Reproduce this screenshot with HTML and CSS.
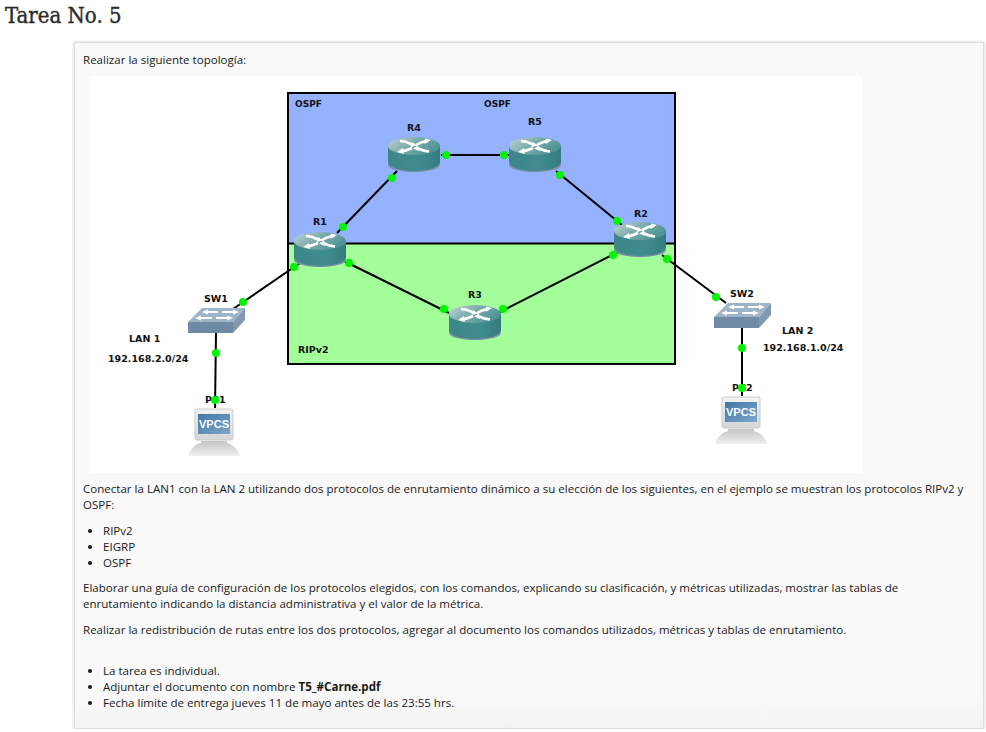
FILE: index.html
```html
<!DOCTYPE html>
<html lang="es">
<head>
    <meta charset="UTF-8">
    <meta name="viewport" content="width=device-width, initial-scale=1.0">
    <title>Tarea No. 5</title>
    <link rel="stylesheet" href="styles.css">
</head>
<body>

    <h1 class="page-title">Tarea No. 5</h1>

    <div class="task-box">
        <p class="intro">Realizar la siguiente topología:</p>

        <svg class="topology" viewBox="89 76 773 397" width="773" height="397" role="img" aria-label="Topología de red">
            <defs>
                <linearGradient id="routerTop" x1="0" y1="0" x2="1" y2="0.5">
                    <stop offset="0" stop-color="#c4d6d6"/>
                    <stop offset="0.5" stop-color="#7dacad"/>
                    <stop offset="1" stop-color="#4f9496"/>
                </linearGradient>
                <linearGradient id="routerSide" x1="0" y1="0" x2="1" y2="0">
                    <stop offset="0" stop-color="#3e8688"/>
                    <stop offset="0.6" stop-color="#3f8c8e"/>
                    <stop offset="1" stop-color="#357b7d"/>
                </linearGradient>
                <linearGradient id="screen" x1="0" y1="0" x2="1" y2="1">
                    <stop offset="0" stop-color="#3f77a8"/>
                    <stop offset="1" stop-color="#7fa6c8"/>
                </linearGradient>
                <linearGradient id="monitor" x1="0" y1="0" x2="0" y2="1">
                    <stop offset="0" stop-color="#f2f3f3"/>
                    <stop offset="1" stop-color="#d3d6d5"/>
                </linearGradient>
                <linearGradient id="pcBase" x1="0" y1="0" x2="0" y2="1">
                    <stop offset="0" stop-color="#c2c5c4"/>
                    <stop offset="1" stop-color="#eff0f0"/>
                </linearGradient>

                <g id="router">
                    <ellipse cx="26" cy="28" rx="26" ry="7" fill="#7d8fa8"/>
                    <path d="M0 9 V25 C0 30 12 34 26 34 C40 34 52 30 52 25 V9 Z" fill="url(#routerSide)"/>
                    <ellipse cx="26" cy="9" rx="26" ry="9" fill="url(#routerTop)"/>
                    <path class="arrow" d="M12 4 C18 4 21 6 25 8 M12 14.5 C17 14 20 13 24 11 M40 4 C35 4 32 6 28 8 M41 14.5 C36 14 33 13 29 11"/>
                    <path class="arrow-head" d="M24 5 L29 8.5 L22.5 10 Z M9 15 L15 11 L16 17 Z M43 3 L37 1.5 L36.5 7 Z M30 8.5 L25 11.5 L31 14 Z"/>
                </g>

                <g id="switch">
                    <path d="M14 0 H57 L45 14 H0 Z" fill="#9db4c9"/>
                    <path d="M0 14 H45 V25 H0 Z" fill="#6f8aa5"/>
                    <path d="M45 14 L57 0 V12 L45 25 Z" fill="#8299b1"/>
                    <path class="sw-arrow" d="M18 4 H30 M34 4 H47 M11 10 H24 M28 10 H41"/>
                    <path class="arrow-head" d="M14 4 L20 1.5 V6.5 Z M51 4 L45 1.5 V6.5 Z M7 10 L13 7.5 V12.5 Z M45 10 L39 7.5 V12.5 Z"/>
                </g>

                <g id="pc">
                    <rect x="0" y="0" width="38" height="31" rx="2" fill="url(#monitor)" stroke="#c9cccb"/>
                    <rect x="3" y="5" width="32" height="20" fill="url(#screen)"/>
                    <path d="M6 32 H32 V34 C38 35 42 40 45 46 C45 47 44 47 43 47 H-5 C-6 47 -7 47 -7 46 C-4 40 0 35 6 34 Z" fill="url(#pcBase)"/>
                    <text class="vpcs" x="19" y="19">VPCS</text>
                </g>
            </defs>

            <rect class="page-bg" x="89" y="76" width="773" height="397"/>

            <rect class="zone-ospf" x="288" y="93" width="387" height="150"/>
            <rect class="zone-rip" x="288" y="243" width="387" height="121"/>
            <rect class="zone-frame" x="288" y="93" width="387" height="271"/>
            <line class="zone-frame" x1="288" y1="243.5" x2="675" y2="243.5"/>

            <text class="label zone-label" x="295" y="107">OSPF</text>
            <text class="label zone-label" x="484" y="107">OSPF</text>
            <text class="label" x="298" y="353">RIPv2</text>
            <text class="label" x="407" y="131">R4</text>
            <text class="label" x="528" y="125">R5</text>
            <text class="label" x="313" y="225">R1</text>
            <text class="label" x="634" y="217">R2</text>
            <text class="label" x="468" y="298">R3</text>
            <text class="label" x="204" y="302">SW1</text>
            <text class="label" x="730" y="297">SW2</text>
            <text class="label" x="129" y="342">LAN 1</text>
            <text class="label" x="108" y="362">192.168.2.0/24</text>
            <text class="label" x="782" y="334">LAN 2</text>
            <text class="label" x="763" y="351">192.168.1.0/24</text>
            <text class="label" x="205" y="403">PC1</text>
            <text class="label" x="732" y="391">PC2</text>

            <use href="#pc" x="195" y="409"/>
            <use href="#pc" x="722" y="397"/>

            <line class="link" x1="441" y1="155" x2="509" y2="155"/>
            <line class="link" x1="337" y1="233" x2="397" y2="171"/>
            <line class="link" x1="556" y1="171" x2="622" y2="225"/>
            <line class="link" x1="300" y1="263" x2="233" y2="309"/>
            <line class="link" x1="342" y1="260" x2="449" y2="313"/>
            <line class="link" x1="498" y1="313" x2="618" y2="252"/>
            <line class="link" x1="662" y1="255" x2="726" y2="303"/>
            <line class="link" x1="216" y1="333" x2="215" y2="408"/>
            <line class="link" x1="742" y1="328" x2="742" y2="396"/>

            <use href="#router" x="388" y="137"/>
            <use href="#router" x="509" y="137"/>
            <use href="#router" x="294" y="232"/>
            <use href="#router" x="614" y="222"/>
            <use href="#router" x="449" y="305"/>
            <use href="#switch" x="188" y="308"/>
            <use href="#switch" x="714" y="303"/>

            <circle class="dot" cx="446" cy="155" r="4"/>
            <circle class="dot" cx="504" cy="155" r="4"/>
            <circle class="dot" cx="392" cy="178" r="4"/>
            <circle class="dot" cx="343" cy="227" r="4"/>
            <circle class="dot" cx="560" cy="175" r="4"/>
            <circle class="dot" cx="617" cy="221" r="4"/>
            <circle class="dot" cx="294" cy="267" r="4"/>
            <circle class="dot" cx="243" cy="302" r="4"/>
            <circle class="dot" cx="349" cy="263" r="4"/>
            <circle class="dot" cx="444" cy="309" r="4"/>
            <circle class="dot" cx="503" cy="309" r="4"/>
            <circle class="dot" cx="613" cy="255" r="4"/>
            <circle class="dot" cx="667" cy="259" r="4"/>
            <circle class="dot" cx="716" cy="297" r="4"/>
            <circle class="dot" cx="216" cy="353" r="4"/>
            <circle class="dot" cx="215" cy="400" r="4"/>
            <circle class="dot" cx="742" cy="348" r="4"/>
            <circle class="dot" cx="742" cy="388" r="4"/>
        </svg>

        <p>Conectar la LAN1 con la LAN 2 utilizando dos protocolos de enrutamiento dinámico a su elección de los siguientes, en el ejemplo se muestran los protocolos RIPv2 y OSPF:</p>

        <ul>
            <li>RIPv2</li>
            <li>EIGRP</li>
            <li>OSPF</li>
        </ul>

        <p>Elaborar una guía de configuración de los protocolos elegidos, con los comandos, explicando su clasificación, y métricas utilizadas, mostrar las tablas de enrutamiento indicando la distancia administrativa y el valor de la métrica.</p>

        <p>Realizar la redistribución de rutas entre los dos protocolos, agregar al documento los comandos utilizados, métricas y tablas de enrutamiento.</p>

        <ul class="rules">
            <li>La tarea es individual.</li>
            <li>Adjuntar el documento con nombre <strong>T5_#Carne.pdf</strong></li>
            <li>Fecha límite de entrega jueves 11 de mayo antes de las 23:55 hrs.</li>
        </ul>
    </div>

</body>
</html>
```

FILE: styles.css
```css
body {
    font-family: "Open Sans", sans-serif;
    font-size: 11.55px;
    line-height: 15.8px;
    color: #1a1a1a;
    background-color: #fff;
    margin: 0;
    padding: 0;
}

.page-title {
    font-family: "DejaVu Serif", serif;
    font-stretch: condensed;
    font-size: 22px;
    font-weight: normal;
    line-height: 24px;
    color: #2a2a2a;
    -webkit-text-stroke: 0.35px #2a2a2a;
    margin: 0;
    padding: 4px 0 14px 5px;
}

.task-box {
    width: 910px;
    height: 687px;
    box-sizing: border-box;
    margin-left: 74px;
    padding: 9px 8px;
    background: linear-gradient(to bottom, #f9f9f9 96%, #f3f3f3 100%);
    border: 1px solid #ddd;
    box-shadow: 0 0 3px rgba(0, 0, 0, 0.2);
}

.task-box p {
    margin: 0 0 11px;
}

.task-box .intro {
    margin-bottom: 8px;
}

.task-box ul {
    margin: 0 0 9px;
    padding-left: 20px;
}

.task-box .rules {
    margin-top: 25px;
}

.topology {
    display: block;
    margin: 0 0 8px 6px;
}

.page-bg {
    fill: #fff;
}

.zone-ospf {
    fill: #94b2ff;
}

.zone-rip {
    fill: #a3ff99;
}

.zone-frame {
    fill: none;
    stroke: #000;
    stroke-width: 2;
}

.label {
    font-family: "DejaVu Sans", sans-serif;
    font-size: 9.5px;
    font-weight: bold;
    fill: #111;
}

.zone-label {
    font-size: 9px;
}

.link {
    stroke: #000;
    stroke-width: 2;
}

.dot {
    fill: #00f500;
}

.arrow {
    fill: none;
    stroke: #fff;
    stroke-width: 2.6;
}

.sw-arrow {
    fill: none;
    stroke: #fff;
    stroke-width: 2;
}

.arrow-head {
    fill: #fff;
}

.vpcs {
    font-family: "Liberation Sans", sans-serif;
    font-size: 11px;
    font-weight: bold;
    fill: #fff;
    text-anchor: middle;
}
```
